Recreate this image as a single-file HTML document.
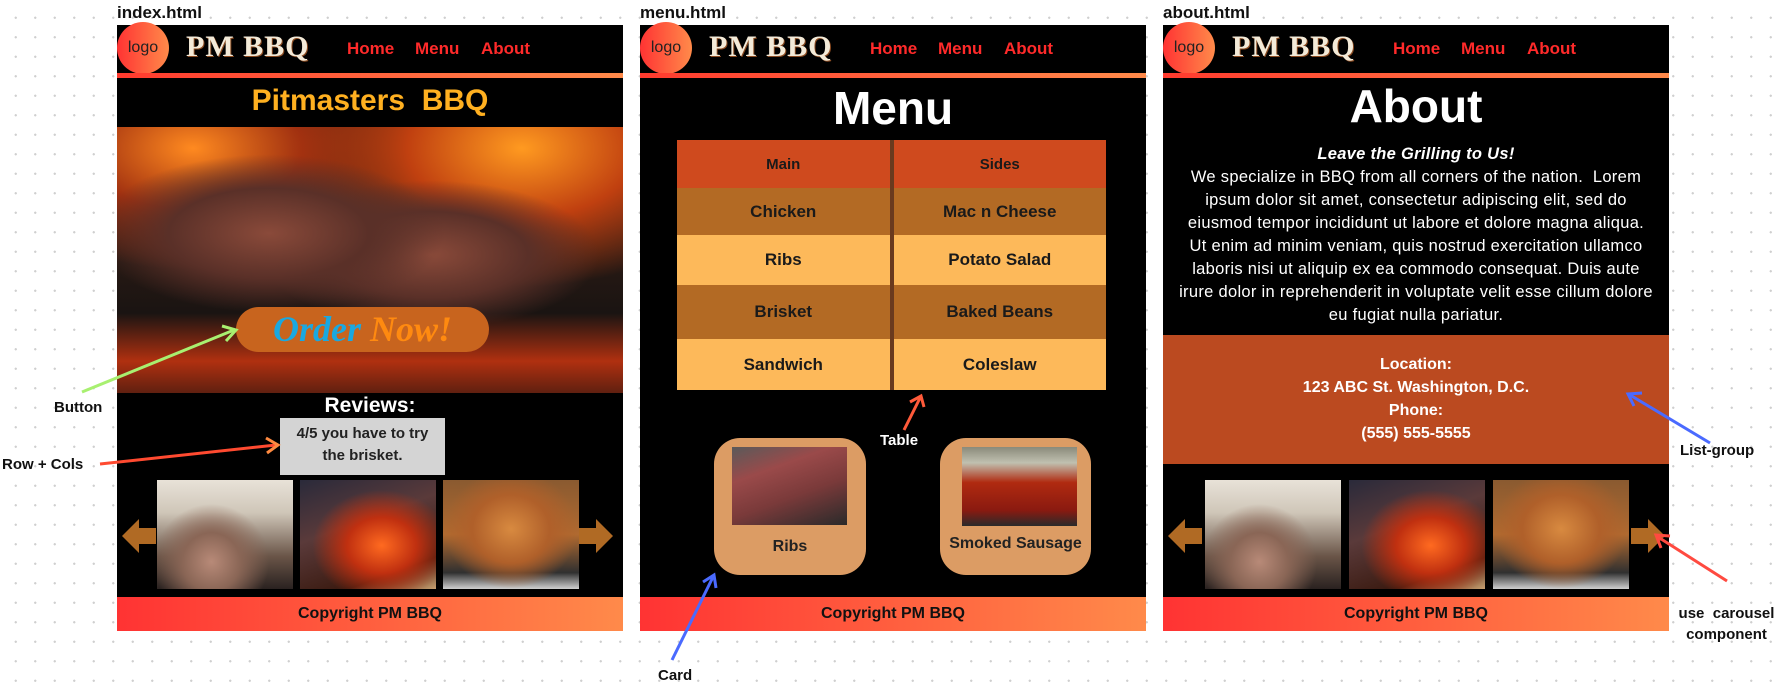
<!DOCTYPE html>
<html><head><meta charset="utf-8"><style>
*{margin:0;padding:0;box-sizing:border-box}
body{width:1783px;height:688px;position:relative;overflow:hidden;font-family:"Liberation Sans",sans-serif;background:#fff;background-image:radial-gradient(circle,#cfcfcf 1px,transparent 1.3px);background-size:19.5px 19.5px;background-position:6px 8px}
.a{position:absolute}
.lbl{font-weight:bold;font-size:17px;color:#111}
.panel{position:absolute;top:25px;width:506px;height:606px;background:#000}
.hdr{position:absolute;left:0;top:0;width:506px;height:49px;background:#000}
.logo{position:absolute;left:0;top:-3px;width:52px;height:52px;border-radius:50%;background:linear-gradient(90deg,#ff3333,#ff8a4a);color:#222;font-size:16px;text-align:center;line-height:52px}
.brand{position:absolute;left:69px;top:5px;font-family:"Liberation Serif",serif;font-weight:bold;font-size:30px;color:#f3ead8;letter-spacing:1px;text-shadow:1px 1px 0 #8a4a20}
.nav{position:absolute;top:14px;font-weight:bold;font-size:17px;color:#ff2a2a}
.line{position:absolute;left:0;top:48px;width:506px;height:5px;background:linear-gradient(90deg,#ff3a2e,#ff8a4a)}
.foot{position:absolute;left:0;bottom:0;width:506px;height:34px;background:linear-gradient(90deg,#ff3333,#ff8a4a);text-align:center;font-weight:bold;font-size:16px;line-height:34px;color:#111}
.ph{position:absolute;top:455px;width:136px;height:109px}
.p1{background:radial-gradient(ellipse at 40% 75%,#b88a78 0,#8a6656 25%,transparent 50%),linear-gradient(180deg,#e8e2d8 0,#cfc6b8 30%,#6a5548 70%,#2a2220 100%)}
.p2{background:radial-gradient(ellipse at 60% 60%,#ff6a20 0,#c03010 30%,transparent 60%),linear-gradient(160deg,#2a2a3a 0,#5a3a3a 40%,#3a1a10 80%,#c8a070 100%)}
.p3{background:radial-gradient(ellipse at 50% 45%,#d88a40 0,#b0602a 40%,transparent 70%),linear-gradient(180deg,#8a5a30 0,#b06a30 50%,#303030 85%,#d0d0d0 100%)}
.arL,.arR{position:absolute;top:494px;width:0;height:0}
.arL{border-top:17px solid transparent;border-bottom:17px solid transparent;border-right:17px solid #b06a24}
.arR{border-top:17px solid transparent;border-bottom:17px solid transparent;border-left:17px solid #b06a24}
.arb{position:absolute;top:503px;width:17px;height:16px;background:#b06a24}
td{text-align:center;font-weight:bold;font-size:17px;color:#1a1a1a;width:50%}
</style></head><body>

<div class="a lbl" style="left:117px;top:3px">index.html</div>
<div class="a lbl" style="left:640px;top:3px">menu.html</div>
<div class="a lbl" style="left:1163px;top:3px">about.html</div>

<!-- panel 1 -->
<div class="panel" style="left:117px">
 <div class="hdr"><div class="logo">logo</div><div class="brand">PM BBQ</div>
 <div class="nav" style="left:230px">Home</div><div class="nav" style="left:298px">Menu</div><div class="nav" style="left:364px">About</div></div>
 <div class="line"></div>
 <div class="a" style="left:0;top:59px;width:506px;text-align:center;font-weight:bold;font-size:30px;color:#ffb020">Pitmasters&nbsp; BBQ</div>
 <div class="a" style="left:0;top:102px;width:506px;height:266px;background:radial-gradient(ellipse at 30% 40%,#8a4a3a 0,#5a3028 20%,transparent 35%),radial-gradient(ellipse at 62% 48%,#8a4a3a 0,#5a3028 22%,transparent 38%),radial-gradient(ellipse at 80% 8%,#ff9a20 0,#c04010 20%,transparent 40%),radial-gradient(ellipse at 15% 8%,#ff8a20 0,#a03010 18%,transparent 35%),linear-gradient(180deg,#3a1a10 0,#2a1a14 45%,#1a1412 70%,#b03010 88%,#602010 100%)"></div>
 <div class="a" style="left:119px;top:282px;width:253px;height:45px;border-radius:23px;background:#c8641e;text-align:center;font-weight:bold;font-style:italic;font-size:36px;line-height:45px;font-family:'Liberation Serif',serif"><span style="color:#1aa8e0">Order</span> <span style="color:#ff8a10">Now!</span></div>
 <div class="a" style="left:0;top:369px;width:506px;text-align:center;font-weight:bold;font-size:21px;color:#fff">Reviews:</div>
 <div class="a" style="left:163px;top:393px;width:165px;height:57px;background:#d4d4d4;text-align:center;font-weight:bold;font-size:15px;line-height:22px;padding:5px 10px 0;color:#222">4/5 you have to try the brisket.</div>
 <div class="arb" style="left:22px"></div><div class="arL" style="left:5px"></div>
 <div class="ph p1" style="left:40px"></div><div class="ph p2" style="left:183px"></div><div class="ph p3" style="left:326px"></div>
 <div class="arb" style="left:462px"></div><div class="arR" style="left:479px"></div>
 <div class="foot">Copyright PM BBQ</div>
</div>

<!-- panel 2 -->
<div class="panel" style="left:640px">
 <div class="hdr"><div class="logo">logo</div><div class="brand">PM BBQ</div>
 <div class="nav" style="left:230px">Home</div><div class="nav" style="left:298px">Menu</div><div class="nav" style="left:364px">About</div></div>
 <div class="line"></div>
 <div class="a" style="left:0;top:56px;width:506px;text-align:center;font-weight:bold;font-size:46px;color:#fff">Menu</div>
 <table class="a" style="left:37px;top:115px;width:429px;height:250px;border-collapse:collapse;table-layout:fixed">
  <tr style="background:#cf4a1e;height:48px"><td style="font-size:15px;border-right:4px solid #6a3a1e">Main</td><td style="font-size:15px">Sides</td></tr>
  <tr style="background:#b36a24;height:47px"><td style="border-right:4px solid #6a3a1e">Chicken</td><td>Mac n Cheese</td></tr>
  <tr style="background:#fdb95a;height:50px"><td style="border-right:4px solid #6a3a1e">Ribs</td><td>Potato Salad</td></tr>
  <tr style="background:#b36a24;height:54px"><td style="border-right:4px solid #6a3a1e">Brisket</td><td>Baked Beans</td></tr>
  <tr style="background:#fdb95a;height:51px"><td style="border-right:4px solid #6a3a1e">Sandwich</td><td>Coleslaw</td></tr>
 </table>
 <div class="a" style="left:74px;top:413px;width:152px;height:137px;border-radius:26px;background:#dc9c64"></div>
 <div class="a" style="left:92px;top:422px;width:115px;height:78px;background:linear-gradient(160deg,#5a5a5a 0,#9a4a4a 30%,#7a3a3a 60%,#2a2a2a 100%)"></div>
 <div class="a" style="left:74px;top:513px;width:152px;text-align:center;font-weight:bold;font-size:16px;color:#222">Ribs</div>
 <div class="a" style="left:300px;top:413px;width:151px;height:137px;border-radius:26px;background:#dc9c64"></div>
 <div class="a" style="left:322px;top:422px;width:115px;height:79px;background:linear-gradient(180deg,#8a8a7a 0,#c0c0b0 20%,#b02a10 45%,#8a1a10 80%,#2a2a2a 100%)"></div>
 <div class="a" style="left:300px;top:510px;width:151px;text-align:center;font-weight:bold;font-size:16px;color:#222">Smoked Sausage</div>
 <div class="foot">Copyright PM BBQ</div>
</div>

<!-- panel 3 -->
<div class="panel" style="left:1163px">
 <div class="hdr"><div class="logo">logo</div><div class="brand">PM BBQ</div>
 <div class="nav" style="left:230px">Home</div><div class="nav" style="left:298px">Menu</div><div class="nav" style="left:364px">About</div></div>
 <div class="line"></div>
 <div class="a" style="left:0;top:54px;width:506px;text-align:center;font-weight:bold;font-size:46px;color:#fff">About</div>
 <div class="a" style="left:16px;top:118px;width:474px;text-align:center;font-size:16.5px;line-height:23px;color:#fff;letter-spacing:0.3px"><b><i>Leave the Grilling to Us!</i></b><br>We specialize in BBQ from all corners of the nation.&nbsp; Lorem ipsum dolor sit amet, consectetur adipiscing elit, sed do eiusmod tempor incididunt ut labore et dolore magna aliqua. Ut enim ad minim veniam, quis nostrud exercitation ullamco laboris nisi ut aliquip ex ea commodo consequat. Duis aute irure dolor in reprehenderit in voluptate velit esse cillum dolore eu fugiat nulla pariatur.</div>
 <div class="a" style="left:0;top:310px;width:506px;height:129px;background:#bb4a20;text-align:center;font-weight:bold;font-size:16px;line-height:23px;color:#fff;padding-top:18px">Location:<br>123 ABC St. Washington, D.C.<br>Phone:<br>(555) 555-5555</div>
 <div class="arb" style="left:22px"></div><div class="arL" style="left:5px"></div>
 <div class="ph p1" style="left:42px"></div><div class="ph p2" style="left:186px"></div><div class="ph p3" style="left:330px"></div>
 <div class="arb" style="left:468px"></div><div class="arR" style="left:485px"></div>
 <div class="foot">Copyright PM BBQ</div>
</div>

<!-- annotations -->
<svg class="a" style="left:0;top:0" width="1783" height="688">
 <line x1="82" y1="392" x2="234" y2="330" stroke="#a8f070" stroke-width="3"/><path d="M222 326 L236 330 L226 341" fill="none" stroke="#a8f070" stroke-width="3"/>
 <line x1="100" y1="464" x2="276" y2="445" stroke="#ff4a30" stroke-width="3"/><path d="M266 438 L278 445 L267 453" fill="none" stroke="#ff8a40" stroke-width="3"/>
 <line x1="904" y1="430" x2="920" y2="398" stroke="#ff5a3a" stroke-width="3"/><path d="M910 402 L921 396 L924 407" fill="none" stroke="#ff5a3a" stroke-width="3"/>
 <line x1="672" y1="660" x2="713" y2="577" stroke="#4a6aff" stroke-width="3"/><path d="M703 582 L714 575 L716 588" fill="none" stroke="#4a6aff" stroke-width="3"/>
 <line x1="1710" y1="443" x2="1630" y2="395" stroke="#4a6aff" stroke-width="3"/><path d="M1634 406 L1628 394 L1642 393" fill="none" stroke="#4a6aff" stroke-width="3"/>
 <line x1="1727" y1="581" x2="1658" y2="537" stroke="#ff4a40" stroke-width="3"/><path d="M1661 548 L1656 535 L1670 536" fill="none" stroke="#ff4a40" stroke-width="3"/>
</svg>
<div class="a" style="left:54px;top:399px;font-weight:bold;font-size:15px;color:#111">Button</div>
<div class="a" style="left:2px;top:456px;font-weight:bold;font-size:15px;color:#111">Row + Cols</div>
<div class="a" style="left:880px;top:432px;font-weight:bold;font-size:15px;color:#fff">Table</div>
<div class="a" style="left:658px;top:667px;font-weight:bold;font-size:15px;color:#111">Card</div>
<div class="a" style="left:1680px;top:442px;font-weight:bold;font-size:15px;color:#111">List-group</div>
<div class="a" style="left:1670px;top:603px;width:113px;text-align:center;font-weight:bold;font-size:15px;line-height:21px;color:#111">use&nbsp; carousel component</div>
</body></html>
